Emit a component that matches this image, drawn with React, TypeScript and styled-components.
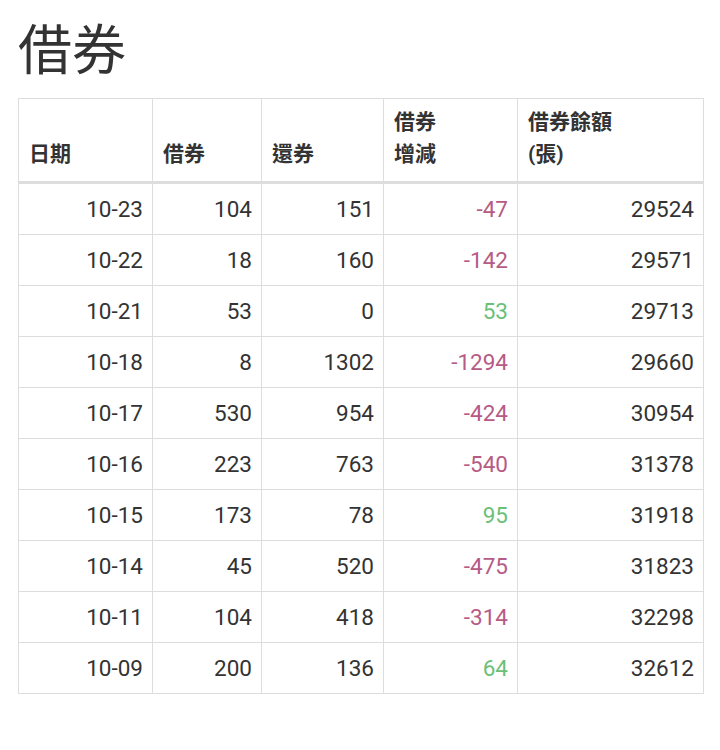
import styled, { createGlobalStyle } from "styled-components";

const GlobalStyle = createGlobalStyle`
  body {
    margin: 0;
    background: #fff;
    font-family: Roboto, "Noto Sans CJK TC", sans-serif;
    color: #333;
  }
`;

interface rowType {
  date: string;
  borrow: number;
  repay: number;
  change: number;
  balance: number;
}

const ROWS: rowType[] = [
  { date: "10-23", borrow: 104, repay: 151, change: -47, balance: 29524 },
  { date: "10-22", borrow: 18, repay: 160, change: -142, balance: 29571 },
  { date: "10-21", borrow: 53, repay: 0, change: 53, balance: 29713 },
  { date: "10-18", borrow: 8, repay: 1302, change: -1294, balance: 29660 },
  { date: "10-17", borrow: 530, repay: 954, change: -424, balance: 30954 },
  { date: "10-16", borrow: 223, repay: 763, change: -540, balance: 31378 },
  { date: "10-15", borrow: 173, repay: 78, change: 95, balance: 31918 },
  { date: "10-14", borrow: 45, repay: 520, change: -475, balance: 31823 },
  { date: "10-11", borrow: 104, repay: 418, change: -314, balance: 32298 },
  { date: "10-09", borrow: 200, repay: 136, change: 64, balance: 32612 },
];

function App() {
  return (
    <Page>
      <GlobalStyle />
      <Title>借券</Title>
      <Table>
        <colgroup>
          <col style={{ width: 134 }} />
          <col style={{ width: 109 }} />
          <col style={{ width: 122 }} />
          <col style={{ width: 134 }} />
          <col style={{ width: 186 }} />
        </colgroup>
        <thead>
          <tr>
            <Th>日期</Th>
            <Th>借券</Th>
            <Th>還券</Th>
            <Th>
              借券
              <br />
              增減
            </Th>
            <Th>
              借券餘額
              <br />
              (張)
            </Th>
          </tr>
        </thead>
        <tbody>
          {ROWS.map((row) => (
            <tr key={row.date}>
              <Td>{row.date}</Td>
              <Td>{row.borrow}</Td>
              <Td>{row.repay}</Td>
              <Td $tone={row.change < 0 ? "down" : "up"}>{row.change}</Td>
              <Td>{row.balance}</Td>
            </tr>
          ))}
        </tbody>
      </Table>
    </Page>
  );
}

export default App;

const Page = styled.div`
  padding: 9px 17px 40px 18px;
`;

const Title = styled.h1`
  margin: 0 0 14px 0;
  font-family: "Noto Sans CJK TC", sans-serif;
  font-size: 54px;
  font-weight: 400;
  line-height: 75px;
  color: #333;
`;

const Table = styled.table`
  width: 685px;
  border-collapse: collapse;
  table-layout: fixed;
  border: 1px solid #ddd;
`;

const Th = styled.th`
  height: 71px;
  padding: 0 10px 11px;
  text-align: left;
  vertical-align: bottom;
  font-family: Roboto, "Noto Sans CJK TC", sans-serif;
  font-size: 21px;
  font-weight: 700;
  line-height: 32px;
  color: #333;
  border: 1px solid #ddd;
  border-bottom: 3px solid #ddd;
`;

const Td = styled.td<{ $tone?: "up" | "down" }>`
  height: 50px;
  padding: 0 9px 0 10px;
  text-align: right;
  font-size: 22.5px;
  line-height: 24px;
  border: 1px solid #ddd;
  color: ${(p) =>
    p.$tone === "down" ? "#b65b85" : p.$tone === "up" ? "#6cbf78" : "#333"};
`;
